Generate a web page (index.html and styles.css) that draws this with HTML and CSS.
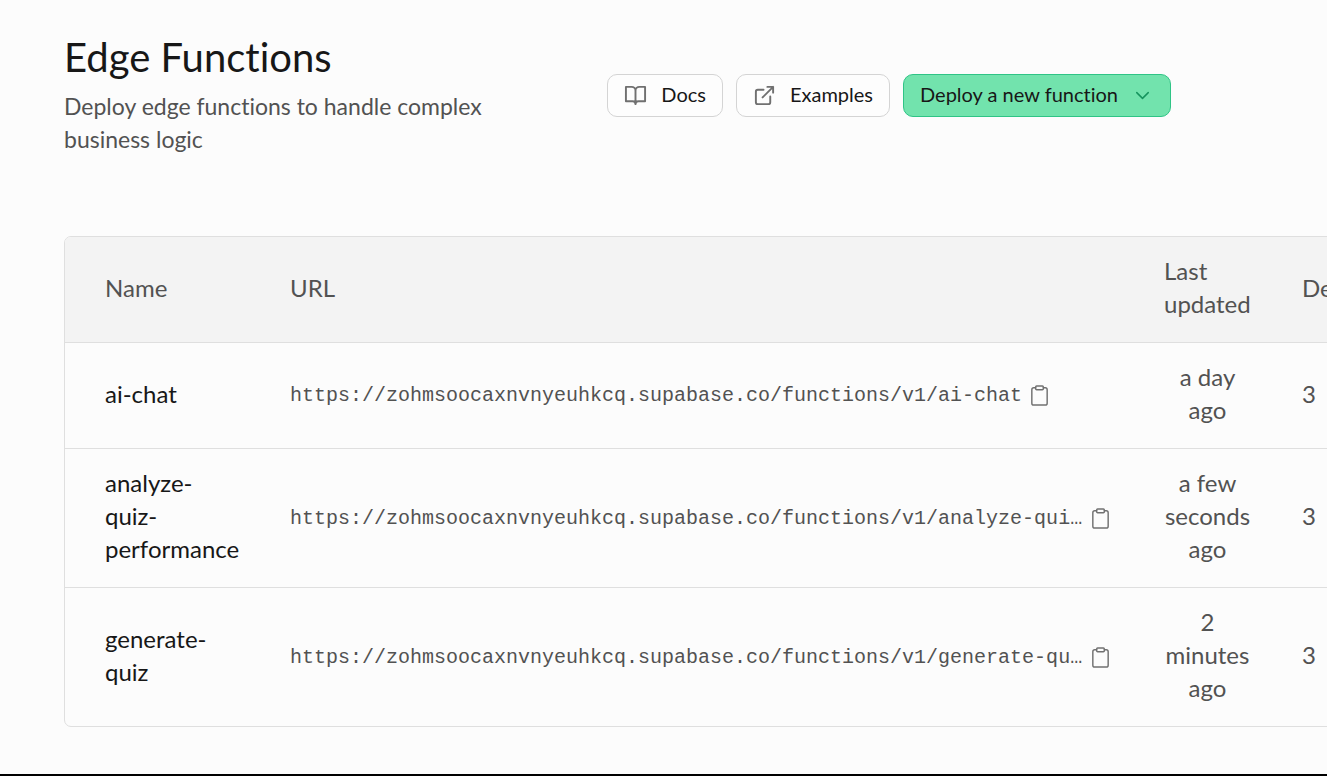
FILE: index.html
```html
<!DOCTYPE html>
<html lang="en">
<head>
<meta charset="utf-8">
<title>Edge Functions</title>
<link rel="stylesheet" href="styles.css">
</head>
<body>
<svg class="sprite" aria-hidden="true">
  <symbol id="clipboard" viewBox="0 0 24 24">
    <rect x="8" y="2" width="8" height="4" rx="1"/>
    <path d="M16 4h2a2 2 0 0 1 2 2v14a2 2 0 0 1-2 2H6a2 2 0 0 1-2-2V6a2 2 0 0 1 2-2h2"/>
  </symbol>
</svg>
<main class="page">
  <header class="page-header">
    <div class="intro">
      <h1 class="title">Edge Functions</h1>
      <p class="subtitle">Deploy edge functions to handle complex business logic</p>
    </div>
    <div class="actions">
      <a class="button" href="#docs">
        <svg class="icon" viewBox="0 0 24 24" aria-hidden="true"><path d="M2 3h6a4 4 0 0 1 4 4v14a3 3 0 0 0-3-3H2zM22 3h-6a4 4 0 0 0-4 4v14a3 3 0 0 1 3-3h7z"/></svg>
        <span class="label">Docs</span>
      </a>
      <a class="button" href="#examples">
        <svg class="icon" viewBox="0 0 24 24" aria-hidden="true"><path d="M15 3h6v6M10 14 21 3M18 13v6a2 2 0 0 1-2 2H5a2 2 0 0 1-2-2V8a2 2 0 0 1 2-2h6"/></svg>
        <span class="label">Examples</span>
      </a>
      <button class="button button-primary" type="button">
        <span class="label">Deploy a new function</span>
        <svg class="icon icon-chevron" viewBox="0 0 24 24" aria-hidden="true"><path d="m6 9 6 6 6-6"/></svg>
      </button>
    </div>
  </header>

  <div class="table-card">
    <table class="functions">
      <colgroup><col class="col-name"><col><col class="col-updated"><col class="col-deployments"></colgroup>
      <thead>
        <tr><th scope="col">Name</th><th scope="col">URL</th><th scope="col">Last updated</th><th scope="col">Deployments</th></tr>
      </thead>
      <tbody>
        <tr>
          <td class="name">ai-chat</td>
          <td class="endpoint"><div class="url-cell"><span class="url">https://zohmsoocaxnvnyeuhkcq.supabase.co/functions/v1/ai-chat</span><button class="copy" type="button" aria-label="Copy URL"><svg class="icon icon-copy"><use href="#clipboard"/></svg></button></div></td>
          <td class="updated">a day ago</td>
          <td>3</td>
        </tr>
        <tr>
          <td class="name">analyze-quiz-performance</td>
          <td class="endpoint"><div class="url-cell"><span class="url">https://zohmsoocaxnvnyeuhkcq.supabase.co/functions/v1/analyze-quiz-performance</span><button class="copy" type="button" aria-label="Copy URL"><svg class="icon icon-copy"><use href="#clipboard"/></svg></button></div></td>
          <td class="updated">a few seconds ago</td>
          <td>3</td>
        </tr>
        <tr>
          <td class="name">generate-quiz</td>
          <td class="endpoint"><div class="url-cell"><span class="url">https://zohmsoocaxnvnyeuhkcq.supabase.co/functions/v1/generate-quiz</span><button class="copy" type="button" aria-label="Copy URL"><svg class="icon icon-copy"><use href="#clipboard"/></svg></button></div></td>
          <td class="updated">2 minutes ago</td>
          <td>3</td>
        </tr>
      </tbody>
    </table>
  </div>
</main>
</body>
</html>
```

FILE: styles.css
```css
* { box-sizing: border-box; }

body {
  margin: 0;
  min-height: 100vh;
  overflow-x: hidden;
  border-bottom: 2px solid #000;
  background: #fcfcfc;
  color: #525252;
  font: 24px/33px Lato, "Liberation Sans", sans-serif;
  font-variant-ligatures: none;
}

.sprite { position: absolute; width: 0; height: 0; }

.page { padding: 33px 0 0 64px; }

.page-header {
  display: flex;
  align-items: center;
  justify-content: space-between;
  gap: 24px;
  margin-bottom: 78px;
  padding-right: 156px;
}

.intro { max-width: 460px; padding-bottom: 2px; }

.title {
  margin: 0 0 9px;
  color: #171717;
  font-size: 40px;
  font-weight: 400;
  line-height: 48px;
}

.subtitle { margin: 0; font-size: 23px; }

.actions { display: flex; flex-shrink: 0; gap: 13px; }

.button {
  display: flex;
  align-items: center;
  gap: 14px;
  height: 43px;
  padding: 0 16px;
  border: 1px solid #d4d4d4;
  border-radius: 10px;
  background: #fdfdfd;
  color: #171717;
  font: inherit;
  font-size: 20px;
  font-variant-ligatures: none;
  text-decoration: none;
  white-space: nowrap;
  cursor: pointer;
}

.label { padding-bottom: 3px; }

.button-primary { gap: 13px; border-color: #2fc486; background: #72e3ad; }

.icon {
  width: 23px;
  height: 23px;
  fill: none;
  stroke: #707070;
  stroke-width: 2;
  stroke-linecap: round;
  stroke-linejoin: round;
}

.icon-chevron { stroke: #15935d; stroke-width: 1.5; }
.icon-copy { stroke-width: 1.5; }

.table-card {
  width: 100%;
  min-width: 1402px;
  overflow: hidden;
  border: 1px solid #dfdfdf;
  border-radius: 7px;
}

.functions {
  width: 100%;
  table-layout: fixed;
  border-collapse: separate;
  border-spacing: 0;
}

.col-name { width: 185px; }
.col-updated { width: 138px; }
.col-deployments { width: 203px; }

.functions th,
.functions td {
  padding: 17px 11px 22px 40px;
  border-bottom: 1px solid #dfdfdf;
  text-align: left;
  font-weight: 400;
}

.functions th { background: #f3f3f3; }
.functions tbody tr:last-child td { border-bottom: 0; }
.functions .name { color: #171717; }
.functions .updated { text-align: center; }
.functions .endpoint { padding: 20px 0 20px 40px; }

.url-cell { display: flex; align-items: center; gap: 6px; }

.url {
  max-width: 793px;
  overflow: hidden;
  font: 20px/33px "Liberation Mono", monospace;
  text-overflow: ellipsis;
  white-space: nowrap;
}

.copy {
  display: flex;
  flex-shrink: 0;
  padding: 0;
  border: 0;
  background: none;
  cursor: pointer;
}
```
